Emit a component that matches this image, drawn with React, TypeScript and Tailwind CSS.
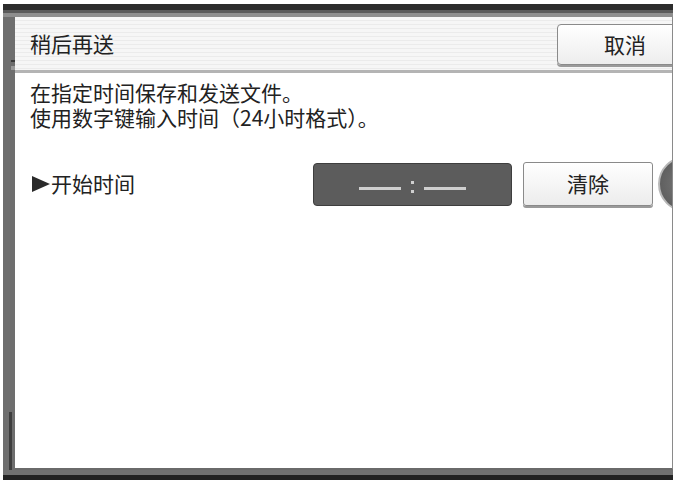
import { FC } from "react";

const font = "font-['Noto_Sans_CJK_SC','Noto_Sans',sans-serif]";

const Header: FC = () => (
  <div className="flex h-[56px] shrink-0 items-center border-b-[3px] border-[#b4b4b4] bg-[repeating-linear-gradient(180deg,#f6f6f6_0px,#f6f6f6_3px,#ebebeb_3px,#ebebeb_4px)] pl-[15px]">
    <span className="text-[21px] leading-none text-[#222]">稍后再送</span>
    <button className="ml-auto -mr-[17px] mt-[2px] flex h-[41px] w-[132px] shrink-0 items-center justify-center rounded-[4px] border border-[#8a8a8a] bg-[linear-gradient(180deg,#ffffff,#ededed)] pl-[4px] text-[21px] text-[#222] shadow-[0_2px_0_#9a9a9a]">
      取消
    </button>
  </div>
);

const TimeField: FC = () => (
  <div className="flex h-[43px] w-[199px] shrink-0 items-center justify-center gap-[10px] rounded-[4px] border border-[#3e3e3e] bg-[#5c5c5c] pt-[9px]">
    <span className="h-[3px] w-[42px] bg-[#cfcfcf]" />
    <span className="mb-[4px] flex flex-col gap-[6px]">
      <span className="h-[3px] w-[3px] bg-[#cfcfcf]" />
      <span className="h-[3px] w-[3px] bg-[#cfcfcf]" />
    </span>
    <span className="h-[3px] w-[42px] bg-[#cfcfcf]" />
  </div>
);

const StartRow: FC = () => (
  <div className="mt-[26px] flex h-[56px] items-center">
    <div className="flex w-[283px] shrink-0 items-center pl-[2px] text-[21px] text-[#222]">
      <svg width="18" height="16" viewBox="0 0 18 16" className="mr-[1px]">
        <polygon points="0,0 18,8 0,16" fill="#2a2a2a" />
      </svg>
      开始时间
    </div>
    <TimeField />
    <button className="ml-[11px] flex h-[44px] w-[130px] shrink-0 items-center justify-center rounded-[3px] border border-[#8a8a8a] bg-[linear-gradient(180deg,#ffffff,#ececec)] text-[21px] text-[#222] shadow-[0_2px_0_#9a9a9a]">
      清除
    </button>
    <div className="ml-[5px] h-[56px] w-[56px] shrink-0 rounded-full border-[2px] border-[#b8b8b8] bg-[radial-gradient(circle,#7a7a7a,#555555)]" />
  </div>
);

const App: FC = () => {
  return (
    <div className={`h-[486px] w-[680px] bg-white pl-[3px] pt-[4px] ${font}`}>
      <div className="flex h-[476px] w-[670px] flex-col">
        {/* top bar */}
        <div className="flex h-[13px] shrink-0 flex-col">
          <div className="h-[6px] bg-[#2c2c2c]" />
          <div className="h-[3px] bg-[#5a5a5a]" />
          <div className="h-[4px] bg-[#8e8e8e]" />
        </div>
        <div className="flex min-h-0 flex-1">
          {/* left frame */}
          <div className="flex w-[12px] shrink-0 flex-col bg-[#6e6e6e]">
            <div className="mt-[43px] ml-[8px] h-[2px] w-[4px] bg-[#3a3a3a]" />
            <div className="mt-[4px] ml-[8px] h-[4px] w-[4px] bg-[#9a9a9a]" />
            <div className="mt-auto ml-[6px] h-[58px] w-[3px] bg-[#3e3e3e]" />
          </div>
          {/* panel */}
          <div className="flex min-w-0 flex-1 flex-col overflow-hidden border-r border-b-2 border-[#6a6a6a] border-r-[#8a8a8a] bg-white">
            <Header />
            <div className="pl-[15px]">
              <div className="mt-[7px] text-[21px] leading-[25px] text-[#222]">
                <p>在指定时间保存和发送文件。</p>
                <p>使用数字键输入时间（24小时格式）。</p>
              </div>
              <StartRow />
            </div>
          </div>
        </div>
        {/* bottom bar */}
        <div className="h-[5px] shrink-0 bg-[#727272]" />
        <div className="h-[5px] shrink-0 bg-[#232323]" />
      </div>
    </div>
  );
};

export default App;
